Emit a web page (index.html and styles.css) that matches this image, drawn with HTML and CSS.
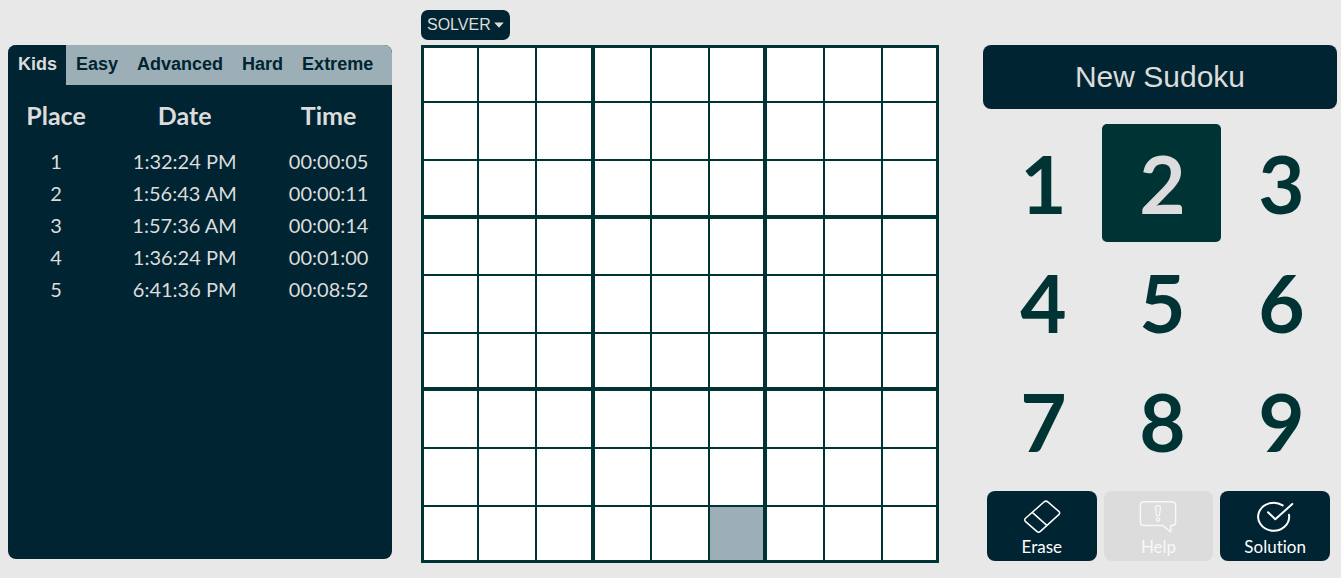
FILE: index.html
```html
<!DOCTYPE html>
<html lang="en">
<head>
<meta charset="utf-8">
<meta name="viewport" content="width=device-width, initial-scale=1">
<title>Sudoku</title>
<link rel="stylesheet" href="styles.css">
</head>
<body>
<main class="game">
  <div class="toolbar">
    <button class="solver" type="button">SOLVER
      <svg class="caret" viewBox="0 0 10 6" aria-hidden="true"><path d="M0.2 0.5h9.6L5 5.7z"/></svg>
    </button>
  </div>

  <section class="scores" aria-label="Best times">
    <div class="tabs" role="tablist">
      <button class="tab tab-active" type="button" role="tab" aria-selected="true">Kids</button>
      <button class="tab" type="button" role="tab" aria-selected="false">Easy</button>
      <button class="tab" type="button" role="tab" aria-selected="false">Advanced</button>
      <button class="tab" type="button" role="tab" aria-selected="false">Hard</button>
      <button class="tab" type="button" role="tab" aria-selected="false">Extreme</button>
    </div>
    <table class="score-table">
      <thead>
        <tr><th class="col-place" scope="col">Place</th><th class="col-date" scope="col">Date</th><th scope="col">Time</th></tr>
      </thead>
      <tbody>
        <tr><td>1</td><td>1:32:24 PM</td><td>00:00:05</td></tr>
        <tr><td>2</td><td>1:56:43 AM</td><td>00:00:11</td></tr>
        <tr><td>3</td><td>1:57:36 AM</td><td>00:00:14</td></tr>
        <tr><td>4</td><td>1:36:24 PM</td><td>00:01:00</td></tr>
        <tr><td>5</td><td>6:41:36 PM</td><td>00:08:52</td></tr>
      </tbody>
    </table>
  </section>

  <section class="board" id="board" aria-label="Sudoku board"></section>

  <section class="controls" aria-label="Controls">
    <button class="new-game" type="button">New Sudoku</button>
    <div class="keypad">
      <button class="key" type="button">1</button>
      <button class="key key-active" type="button" aria-pressed="true">2</button>
      <button class="key" type="button">3</button>
      <button class="key" type="button">4</button>
      <button class="key" type="button">5</button>
      <button class="key" type="button">6</button>
      <button class="key" type="button">7</button>
      <button class="key" type="button">8</button>
      <button class="key" type="button">9</button>
    </div>
    <div class="actions">
      <button class="action" type="button">
        <svg class="icon" viewBox="0 0 38 34" aria-hidden="true">
          <path d="M21.2 1.8Q23 0.4 24.8 1.9L35.8 11.4Q37.6 13 35.8 14.6L17.4 31.4Q15.6 33 13.8 31.4L2.6 21.6Q0.8 20 2.5 18.3ZM9.3 12.4L23.8 25.4"/>
        </svg>
        Erase
      </button>
      <button class="action" type="button" disabled>
        <svg class="icon" viewBox="0 0 38 34" aria-hidden="true">
          <path d="M5 1.7H33Q36.6 1.7 36.6 5.2V22Q36.6 25.5 33 25.5H31.7V32L23.7 25.5H5Q1.4 25.5 1.4 22V5.2Q1.4 1.7 5 1.7Z"/>
          <path class="fine" d="M16.6 7Q16.6 5.6 19 5.6T21.4 7L20.6 14.6Q20.4 15.8 19 15.8T17.4 14.6Z"/>
          <circle class="fine" cx="19" cy="19.6" r="1.7"/>
        </svg>
        Help
      </button>
      <button class="action" type="button">
        <svg class="icon icon-bold" viewBox="0 0 38 34" aria-hidden="true">
          <path d="M33 14.8A15.5 14 0 1 1 26.7 5.4M12 12.3L19.3 19.3L36.3 4"/>
        </svg>
        Solution
      </button>
    </div>
  </section>
</main>
<script src="board.js"></script>
</body>
</html>
```
FILE: styles.css
```css
* {
  box-sizing: border-box;
}

body {
  margin: 0;
  background: #e8e8e8;
  color: #dcdcdc;
  font-family: Lato, sans-serif;
}

button {
  margin: 0;
  padding: 0;
  border: 0;
  background: none;
  color: inherit;
  font-family: "Liberation Sans", Arial, sans-serif;
}

.game {
  display: grid;
  grid-template-columns: 384fr 518fr 372fr;
  column-gap: 29px;
  row-gap: 5px;
  padding: 10px 1px 15px 8px;
}

.toolbar {
  grid-column: 2;
  display: flex;
}

.solver {
  display: flex;
  align-items: center;
  gap: 3px;
  height: 30px;
  padding: 0 6px;
  border-radius: 7px;
  background: #002431;
  font-size: 16px;
}

.caret {
  width: 10px;
  height: 6px;
  fill: currentColor;
}

.scores {
  grid-column: 1;
  grid-row: 2;
  margin-bottom: 4px;
  overflow: hidden;
  border-radius: 8px;
  background: #002431;
}

.tabs {
  display: flex;
  background: #9cafb7;
}

.tab {
  height: 40px;
  padding: 0 9px 2px 10px;
  color: #002431;
  font-size: 18px;
  font-weight: bold;
}

.tab-active {
  background: #002431;
  color: #dcdcdc;
}

.score-table {
  width: 100%;
  table-layout: fixed;
  border-collapse: collapse;
  text-align: center;
  font-size: 20px;
}

.score-table th {
  height: 60px;
  padding: 0;
  font-size: 25px;
}

.score-table td {
  height: 32px;
  padding: 0;
}

.col-place {
  width: 25%;
}

.col-date {
  width: 42%;
}

.board {
  grid-column: 2;
  grid-row: 2;
  align-self: start;
  display: grid;
  grid-template-columns: 53fr 58fr 56fr 59fr 58fr 55fr 60fr 58fr 55fr;
  grid-template-rows: 53fr 58fr 56fr 59fr 58fr 55fr 60fr 58fr 55fr;
  aspect-ratio: 1;
  border: 3px solid #003333;
}

.cell {
  border: 0 solid #003333;
  border-width: 2px 0 0 2px;
  background: #ffffff;
}

.cell-box-left {
  border-left-width: 4px;
}

.cell-box-top {
  border-top-width: 4px;
}

.cell-first-column {
  border-left-width: 0;
}

.cell-first-row {
  border-top-width: 0;
}

.cell-selected {
  background: #9cafb7;
}

.controls {
  grid-column: 3;
  grid-row: 2;
  display: flex;
  flex-direction: column;
  padding-left: 15px;
}

.new-game {
  height: 64px;
  margin-right: 3px;
  border-radius: 8px;
  background: #002431;
  font-size: 30px;
}

.keypad {
  display: grid;
  grid-template-columns: repeat(3, 1fr);
  row-gap: 1px;
  margin-top: 15px;
}

.key {
  height: 118px;
  padding-left: 2px;
  border-radius: 5px;
  color: #003333;
  font-family: Lato, sans-serif;
  font-size: 80px;
  font-weight: bold;
}

.key-active {
  background: #003333;
  color: #dcdcdc;
}

.actions {
  display: grid;
  grid-template-columns: repeat(3, 1fr);
  gap: 7px;
  margin: 11px 10px 0 4px;
}

.action {
  display: flex;
  flex-direction: column;
  align-items: center;
  height: 70px;
  padding-top: 9px;
  border-radius: 8px;
  background: #002431;
  color: #ffffff;
  font-family: Lato, sans-serif;
  font-size: 17px;
  font-variant-ligatures: none;
  line-height: 26px;
}

.action:disabled {
  background: #dcdcdc;
  color: #f8f8f8;
}

.icon {
  width: 38px;
  height: 34px;
  fill: none;
  stroke: currentColor;
  stroke-width: 1.5;
  stroke-linecap: round;
  stroke-linejoin: round;
}

.icon-bold {
  stroke-width: 2;
}

.fine {
  stroke-width: 1.2;
}
```
FILE: board.js
```js
const board = document.getElementById("board");
const selected = { row: 8, column: 5 };

for (let row = 0; row < 9; row++) {
  for (let column = 0; column < 9; column++) {
    const cell = document.createElement("button");
    cell.type = "button";
    cell.className = "cell";
    cell.setAttribute("aria-label", `Row ${row + 1}, column ${column + 1}`);
    cell.classList.toggle("cell-box-left", column % 3 === 0);
    cell.classList.toggle("cell-box-top", row % 3 === 0);
    cell.classList.toggle("cell-first-column", column === 0);
    cell.classList.toggle("cell-first-row", row === 0);
    cell.classList.toggle("cell-selected", row === selected.row && column === selected.column);
    board.append(cell);
  }
}
```
